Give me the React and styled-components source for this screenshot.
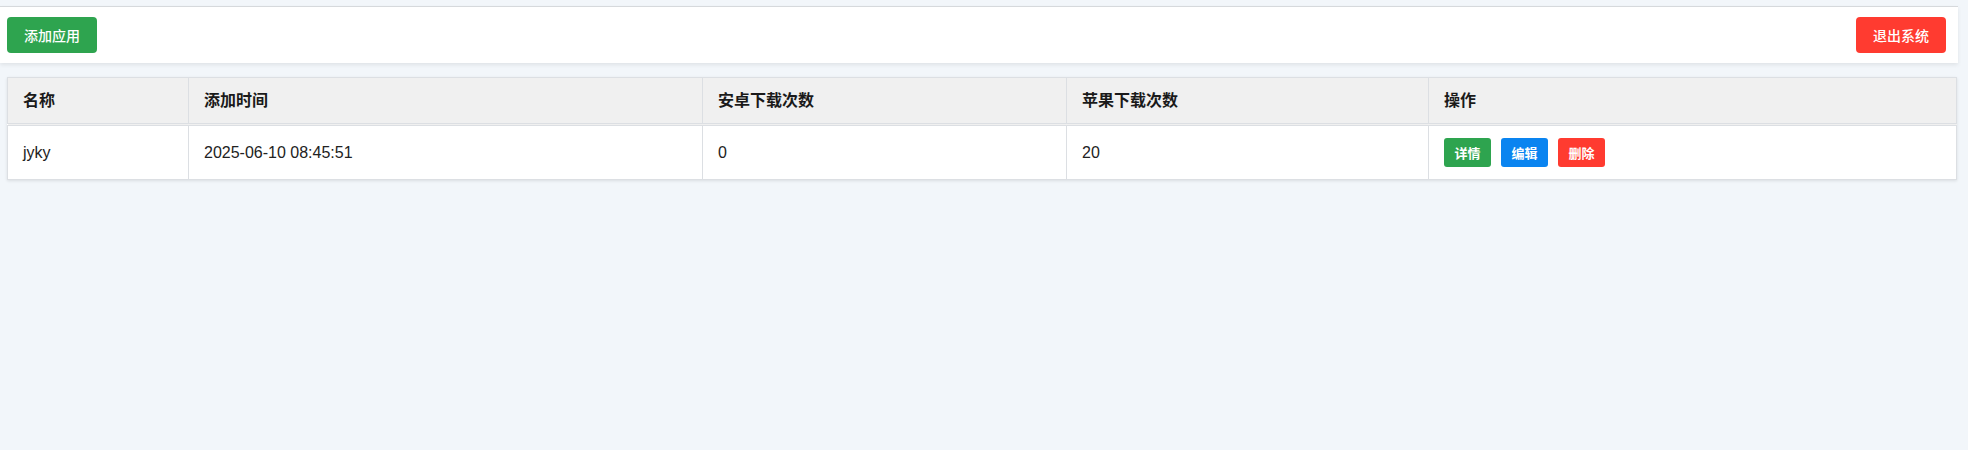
import React from "react";
import styled, { createGlobalStyle } from "styled-components";

const GlobalStyle = createGlobalStyle`
  html, body {
    margin: 0;
    padding: 0;
    background: #f2f6fa;
    font-family: "Liberation Sans", "Noto Sans CJK SC", sans-serif;
  }
`;

const apps = [
  { name: "jyky", time: "2025-06-10 08:45:51", android: 0, ios: 20 },
];

const columns = [
  { title: "名称", width: 181 },
  { title: "添加时间", width: 514 },
  { title: "安卓下载次数", width: 364 },
  { title: "苹果下载次数", width: 362 },
  { title: "操作", width: 528 },
];

const colors = {
  green: "#2ea44f",
  blue: "#0a84f0",
  red: "#ff3b30",
};

const App = () => {
  return (
    <Page>
      <GlobalStyle />
      <TopBar>
        <Button color={colors.green}>添加应用</Button>
        <Button color={colors.red}>退出系统</Button>
      </TopBar>
      <Main>
        <Table>
          <colgroup>
            {columns.map((c) => (
              <Col key={c.title} $w={c.width} />
            ))}
          </colgroup>
          <thead>
            <tr>
              {columns.map((c) => (
                <Th key={c.title}>{c.title}</Th>
              ))}
            </tr>
          </thead>
          <tbody>
            {apps.map((app) => (
              <tr key={app.name}>
                <Td>{app.name}</Td>
                <Td>{app.time}</Td>
                <Td>{app.android}</Td>
                <Td>{app.ios}</Td>
                <Td>
                  <Actions>
                    <SmallButton color={colors.green}>详情</SmallButton>
                    <SmallButton color={colors.blue}>编辑</SmallButton>
                    <SmallButton color={colors.red}>删除</SmallButton>
                  </Actions>
                </Td>
              </tr>
            ))}
          </tbody>
        </Table>
      </Main>
    </Page>
  );
};

const Page = styled.div`
  width: 1958px;
  min-height: 450px;
  padding-top: 6px;
  box-sizing: border-box;
  background: #f2f6fa;
`;

const TopBar = styled.header`
  display: flex;
  justify-content: space-between;
  align-items: center;
  padding: 10px 12px 10px 7px;
  background: #ffffff;
  border-top: 1px solid #d6d9dc;
  box-shadow: 0 2px 4px rgba(0, 0, 0, 0.08);
`;

const Button = styled.button`
  height: 36px;
  padding: 0 17px;
  border: none;
  border-radius: 4px;
  background: ${(p) => p.color};
  color: #ffffff;
  font-family: "Liberation Sans", "Noto Sans CJK SC", sans-serif;
  font-size: 14px;
  font-weight: 500;
  cursor: pointer;
`;

const Main = styled.main`
  padding: 14px 0 0 7px;
`;

const Table = styled.table`
  width: 1949px;
  border-collapse: collapse;
  table-layout: fixed;
  background: #ffffff;
  border: 1px solid #dcdfe3;
  box-shadow: 0 1px 3px rgba(0, 0, 0, 0.1);
`;

const Col = styled.col`
  width: ${(p) => p.$w}px;
`;

const Th = styled.th`
  padding: 12px 15px;
  text-align: left;
  font-size: 16px;
  line-height: 21px;
  font-weight: bold;
  color: #1a1a1a;
  background: #f0f0f0;
  border-right: 1px solid #dcdfe3;
  border-bottom: 3px double #dcdfe3;
`;

const Td = styled.td`
  padding: 12px 15px;
  font-size: 16px;
  line-height: 22px;
  color: #222222;
  border-right: 1px solid #dcdfe3;
  vertical-align: middle;
`;

const Actions = styled.div`
  display: flex;
  gap: 10px;
`;

const SmallButton = styled.button`
  width: 47px;
  height: 29px;
  padding: 0;
  border: none;
  border-radius: 3px;
  background: ${(p) => p.color};
  color: #ffffff;
  font-family: "Liberation Sans", "Noto Sans CJK SC", sans-serif;
  font-size: 13px;
  font-weight: 600;
  cursor: pointer;
`;

export default App;
